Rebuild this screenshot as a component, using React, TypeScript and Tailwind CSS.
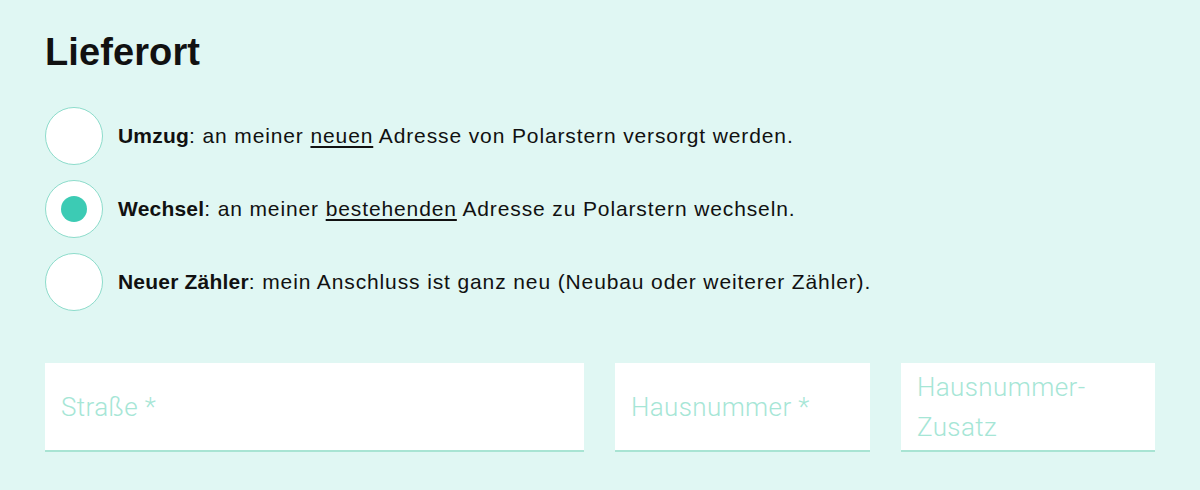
import { useState } from "react"

const optionen = [
  {
    id: "umzug",
    titel: "Umzug",
    vor: ": an meiner ",
    link: "neuen",
    nach: " Adresse von Polarstern versorgt werden.",
  },
  {
    id: "wechsel",
    titel: "Wechsel",
    vor: ": an meiner ",
    link: "bestehenden",
    nach: " Adresse zu Polarstern wechseln.",
  },
  {
    id: "neu",
    titel: "Neuer Zähler",
    vor: ": mein Anschluss ist ganz neu (Neubau oder weiterer Zähler).",
    link: "",
    nach: "",
  },
]

export default function App() {
  const [auswahl, setAuswahl] = useState("wechsel")

  return (
    <div
      className="min-h-[490px] w-full bg-[#e0f7f3] px-[45px] pt-[30px] text-[#111]"
      style={{ fontFamily: '"Liberation Sans", Arial, sans-serif' }}
    >
      {/* HEADER */}
      <h2 className="text-[38px] font-bold leading-[44px] tracking-[0.1px]">Lieferort</h2>

      {/* OPTIONEN */}
      <div className="mt-[33px] flex flex-col gap-[15px]">
        {optionen.map((o) => (
          <label
            key={o.id}
            onClick={() => setAuswahl(o.id)}
            className="flex cursor-pointer items-center gap-[15px]"
          >
            <span className="flex h-[58px] w-[58px] shrink-0 items-center justify-center rounded-full border border-[#8ddccb] bg-white">
              {auswahl === o.id && (
                <span className="h-[26px] w-[26px] rounded-full bg-[#3ccbb4]" />
              )}
            </span>
            <span className="text-[21px] leading-[26px] tracking-[0.88px]">
              <b className="tracking-[0.2px]">{o.titel}</b>
              {o.vor}
              {o.link && <span className="underline underline-offset-[3px]">{o.link}</span>}
              {o.nach}
            </span>
          </label>
        ))}
      </div>

      {/* ADRESSE */}
      <div
        className="mt-[52px] flex gap-[31px] text-[26px] font-light tracking-[0.4px] text-[#a6e6d6]"
        style={{ fontFamily: 'Roboto, "Liberation Sans", sans-serif' }}
      >
        <div className="flex h-[89px] w-[541px] items-center border-b-2 border-[#a8e4d3] bg-white px-[16px] pt-[2px]">
          Straße *
        </div>
        <div className="flex h-[89px] w-[256px] items-center border-b-2 border-[#a8e4d3] bg-white px-[16px] pt-[2px]">
          Hausnummer *
        </div>
        <div className="flex h-[89px] w-[255px] items-center border-b-2 border-[#a8e4d3] bg-white px-[16px] leading-[40px]">
          Hausnummer-
          <br />
          Zusatz
        </div>
      </div>
    </div>
  )
}
